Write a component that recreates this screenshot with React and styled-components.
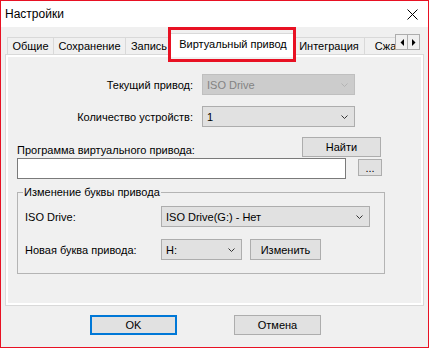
import React from "react";
import styled, { createGlobalStyle } from "styled-components";

const GlobalStyle = createGlobalStyle`
  html, body {
    margin: 0;
    padding: 0;
    background: #f0f0f0;
  }
  body {
    font-family: "Liberation Sans", Arial, sans-serif;
    font-size: 11px;
    color: #000;
  }
  * {
    box-sizing: border-box;
  }
`;

const Window = styled.div`
  position: relative;
  width: 429px;
  height: 348px;
  border: 1px solid #e81123;
  background: #f0f0f0;
  display: flex;
  flex-direction: column;
`;

const TitleBar = styled.div`
  height: 26px;
  flex-shrink: 0;
  background: #fff;
  display: flex;
  align-items: center;
  justify-content: space-between;
  padding: 0 10px 0 4px;
`;

const Title = styled.span`
  font-size: 12px;
`;

const Body = styled.div`
  flex: 1;
  display: flex;
  flex-direction: column;
  padding: 0 4px;
`;

const TabStrip = styled.div`
  position: relative;
  z-index: 1;
  height: 29px;
  display: flex;
  padding: 0 4px 0 2px;
`;

const TabList = styled.div`
  flex: 1;
  display: flex;
  align-items: flex-end;
  overflow: hidden;
`;

const Tab = styled.div`
  position: relative;
  flex-shrink: 0;
  width: ${(p) => p.$w}px;
  height: ${(p) => (p.$active ? 23 : 17)}px;
  margin: ${(p) => (p.$active ? "0 -3px 0 -2px" : "0 -1px 2px 0")};
  z-index: ${(p) => (p.$active ? 1 : 0)};
  padding-top: ${(p) => (p.$active ? 3 : 0)}px;
  line-height: ${(p) => (p.$active ? 15 : 16)}px;
  background: ${(p) => (p.$active ? "#fff" : "#f0f0f0")};
  border: 1px solid #d9d9d9;
  border-bottom: none;
  text-align: center;
  white-space: nowrap;
`;

const ScrollButtons = styled.div`
  display: flex;
  margin-top: 7px;
  height: 16px;
`;

const ScrollButton = styled.div`
  width: 13px;
  height: 16px;
  margin-right: ${(p) => (p.$first ? "-1px" : "0")};
  border: 1px solid #adadad;
  background: #f0f0f0;
  display: flex;
  align-items: center;
  justify-content: center;
`;

const Panel = styled.div`
  margin-top: -2px;
  height: 252px;
  border: 1px solid #d9d9d9;
  box-shadow: inset 0 0 0 2px #fff;
  padding: 19px 37px 0 11px;
  display: flex;
  flex-direction: column;
`;

const FieldRow = styled.div`
  display: flex;
  align-items: center;
  margin-top: ${(p) => p.$mt || 0}px;
`;

const RightLabel = styled.div`
  width: ${(p) => p.$w}px;
  padding-right: 1px;
  text-align: right;
  margin-right: 8px;
  white-space: nowrap;
`;

const LeftLabel = styled.div`
  width: ${(p) => p.$w}px;
  white-space: nowrap;
`;

const Combo = styled.div`
  width: ${(p) => p.$w}px;
  height: 21px;
  display: flex;
  align-items: center;
  justify-content: space-between;
  padding: 0 6px 0 4px;
  background: ${(p) => (p.$disabled ? "#cccccc" : "#e1e1e1")};
  border: 1px solid ${(p) => (p.$disabled ? "#bfbfbf" : "#adadad")};
  color: ${(p) => (p.$disabled ? "#838383" : "#000")};
  white-space: nowrap;
`;

const ProgramRow = styled.div`
  display: flex;
  align-items: flex-end;
  margin-top: 10px;
`;

const ProgramLabel = styled.div`
  line-height: 14px;
  white-space: nowrap;
`;

const Button = styled.div`
  width: ${(p) => p.$w}px;
  height: ${(p) => p.$h || 21}px;
  margin-left: ${(p) => p.$ml || "0"};
  margin-right: ${(p) => p.$mr || "0"};
  margin-top: ${(p) => p.$mt || "0"};
  display: flex;
  align-items: center;
  justify-content: center;
  background: #e1e1e1;
  border: ${(p) => (p.$default ? "2px solid #0078d7" : "1px solid #adadad")};
  white-space: nowrap;
`;

const PathRow = styled.div`
  display: flex;
  align-items: flex-start;
  margin-top: 1px;
`;

const TextInput = styled.div`
  width: 329px;
  height: 21px;
  background: #fff;
  border: 1px solid #7a7a7a;
`;

const Group = styled.fieldset`
  margin: 6px 0 0 0;
  width: 368px;
  padding: 0 7px 13px 7px;
  border: 1px solid #b4b4b4;
  min-width: 0;
`;

const Legend = styled.legend`
  padding: 0 1px;
  margin-left: -2px;
  line-height: 14px;
`;

const DialogButtons = styled.div`
  display: flex;
  gap: 57px;
  margin: 9px 0 0 85px;
`;

const Highlight = styled.div`
  position: absolute;
  left: 167px;
  top: 26px;
  width: 128px;
  height: 35px;
  border: 3px solid #e81123;
  z-index: 5;
  pointer-events: none;
`;

const Chevron = ({ color = "#333" }) => (
  <svg width="7" height="4" viewBox="0 0 7 4">
    <polyline points="0.5,0.5 3.5,3.5 6.5,0.5" fill="none" stroke={color} strokeWidth="1" />
  </svg>
);

const CloseIcon = () => (
  <svg width="11" height="11" viewBox="0 0 11 11">
    <path d="M0.5 0.5 L10.5 10.5 M10.5 0.5 L0.5 10.5" stroke="#000" strokeWidth="1" />
  </svg>
);

const Arrow = ({ dir }) => (
  <svg width="4" height="7" viewBox="0 0 4 7">
    {dir === "left" ? <polygon points="4,0 4,7 0.5,3.5" fill="#000" /> : <polygon points="0,0 0,7 3.5,3.5" fill="#000" />}
  </svg>
);

const TABS = [
  { label: "Общие", w: 47 },
  { label: "Сохранение", w: 73 },
  { label: "Запись", w: 48 },
  { label: "Виртуальный привод", w: 126, active: true },
  { label: "Интеграция", w: 72 },
  { label: "Сжатие", w: 60 }
];

const App = () => (
  <>
    <GlobalStyle />
    <Window>
      <TitleBar>
        <Title>Настройки</Title>
        <CloseIcon />
      </TitleBar>

      <Body>
        <TabStrip>
          <TabList>
            {TABS.map((t) => (
              <Tab key={t.label} $w={t.w} $active={t.active}>
                {t.label}
              </Tab>
            ))}
          </TabList>
          <ScrollButtons>
            <ScrollButton $first>
              <Arrow dir="left" />
            </ScrollButton>
            <ScrollButton>
              <Arrow dir="right" />
            </ScrollButton>
          </ScrollButtons>
        </TabStrip>

        <Panel>
          <FieldRow>
            <RightLabel $w={177}>Текущий привод:</RightLabel>
            <Combo $w={153} $disabled>
              ISO Drive
              <Chevron color="#b3b3b3" />
            </Combo>
          </FieldRow>
          <FieldRow $mt={11}>
            <RightLabel $w={177}>Количество устройств:</RightLabel>
            <Combo $w={153}>
              1
              <Chevron />
            </Combo>
          </FieldRow>

          <ProgramRow>
            <ProgramLabel>Программа виртуального привода:</ProgramLabel>
            <Button $w={79} $h={20} $ml="auto" $mr="5px">
              Найти
            </Button>
          </ProgramRow>
          <PathRow>
            <TextInput />
            <Button $w={24} $h={17} $ml="12px" $mt="1px">
              ...
            </Button>
          </PathRow>

          <Group>
            <Legend>Изменение буквы привода</Legend>
            <FieldRow $mt={7}>
              <LeftLabel $w={136}>ISO Drive:</LeftLabel>
              <Combo $w={209}>
                ISO Drive(G:) - Нет
                <Chevron />
              </Combo>
            </FieldRow>
            <FieldRow $mt={12}>
              <LeftLabel $w={136}>Новая буква привода:</LeftLabel>
              <Combo $w={81}>
                H:
                <Chevron />
              </Combo>
              <Button $w={71} $ml="8px">
                Изменить
              </Button>
            </FieldRow>
          </Group>
        </Panel>

        <DialogButtons>
          <Button $w={87} $h={20} $default>
            OK
          </Button>
          <Button $w={87} $h={20}>
            Отмена
          </Button>
        </DialogButtons>
      </Body>

      <Highlight />
    </Window>
  </>
);

export default App;
